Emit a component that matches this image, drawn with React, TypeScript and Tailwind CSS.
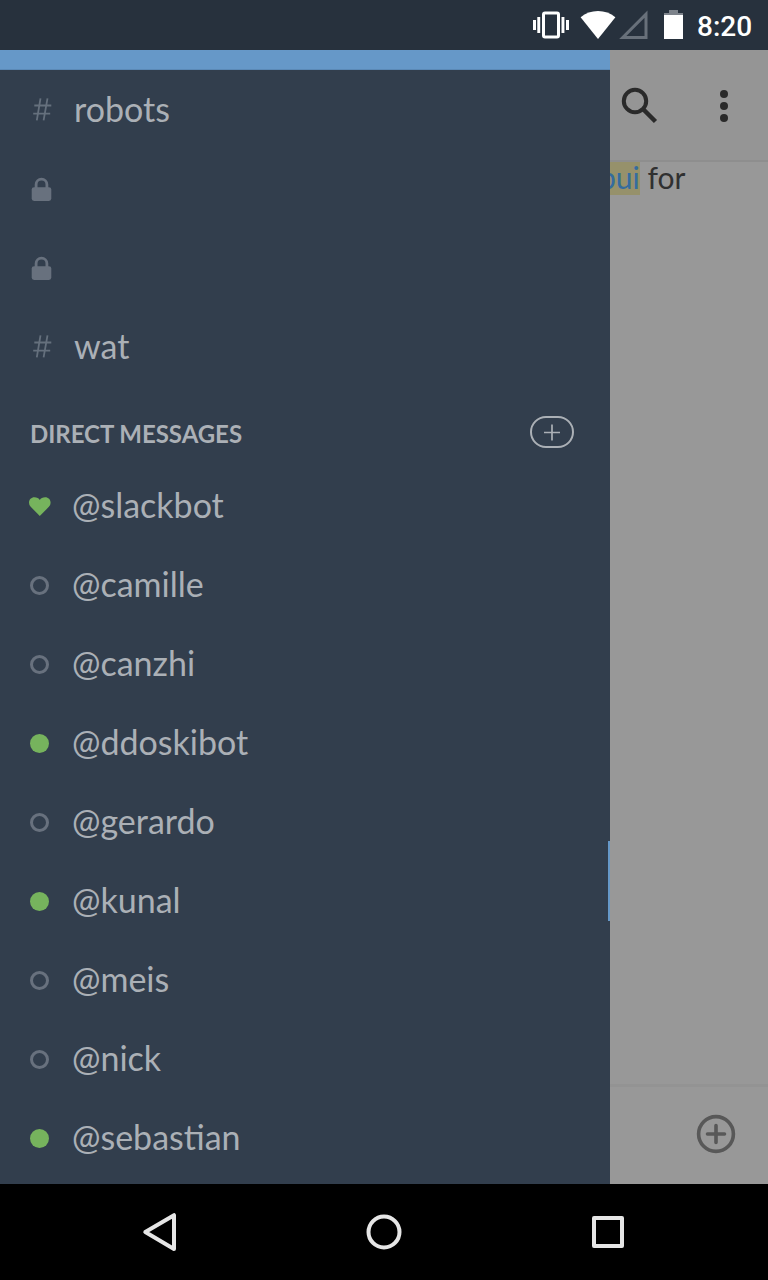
import React from "react";

type Presence = "bot" | "away" | "active";

const members: { name: string; presence: Presence }[] = [
  { name: "@slackbot", presence: "bot" },
  { name: "@camille", presence: "away" },
  { name: "@canzhi", presence: "away" },
  { name: "@ddoskibot", presence: "active" },
  { name: "@gerardo", presence: "away" },
  { name: "@kunal", presence: "active" },
  { name: "@meis", presence: "away" },
  { name: "@nick", presence: "away" },
  { name: "@sebastian", presence: "active" },
];

function StatusBar() {
  return (
    <header className="flex h-[50px] shrink-0 items-center bg-[#27313d] pl-[532px] text-white">
      <svg width="38" height="50" viewBox="532 0 38 50" fill="currentColor">
        <rect x="543.5" y="13" width="15" height="24" rx="1.5" fill="none" stroke="currentColor" strokeWidth="3" />
        <path d="M533 20h3v10h-3zM537.3 17h2.9v16h-2.9zM561.5 17h2.9v16h-2.9zM566 20h3v10h-3z" />
      </svg>
      <svg width="46" height="50" viewBox="570 0 46 50" fill="currentColor">
        <path d="M598 39 580.6 17.2C585.5 13.2 591.5 11 598 11S610.5 13.2 615.4 17.2Z" />
      </svg>
      <svg width="34" height="50" viewBox="616 0 34 50">
        <path d="M646 14.2V37.5H622.8Z" fill="none" stroke="#68707a" strokeWidth="3" />
      </svg>
      <svg width="38" height="50" viewBox="650 0 38 50">
        <path d="M669 10h9v3h5v2h-19v-2h5z" fill="#7d838b" />
        <path d="M664 15h19v24h-19z" fill="#fff" />
      </svg>
      <span className="ml-[9px] mt-[3px] font-['Roboto'] text-[28px] font-medium leading-none">8:20</span>
    </header>
  );
}

function Lock() {
  return (
    <svg className="-ml-px mt-px" width="21" height="24" viewBox="0 0 21 24">
      <rect x="0.7" y="10.2" width="19.6" height="13.8" rx="2.4" fill="#68717e" />
      <path d="M5.1 11V7.5a5.4 5.4 0 0 1 10.8 0V11" fill="none" stroke="#68717e" strokeWidth="2.8" />
    </svg>
  );
}

function Channel({ name }: { name?: string }) {
  return (
    <li className="flex h-[79px] items-center pl-8">
      {name ? (
        <>
          <svg className="-mt-0.5" width="20" height="24" viewBox="0 0 20 24" fill="none" stroke="#65707d" strokeWidth="1.8">
            <path d="M2.3 8.5h17M1.2 16.7h17M8.5 1.3 4.8 23.3M15.5 1.3 11.6 23.3" />
          </svg>
          <span className="-mt-0.5 ml-[22px] text-[34px] leading-none">{name}</span>
        </>
      ) : (
        <Lock />
      )}
    </li>
  );
}

function PresenceIcon({ presence }: { presence: Presence }) {
  if (presence === "bot") {
    return (
      <svg className="mt-px" width="22" height="20" viewBox="0 0 22 20" fill="#76b35d">
        <path d="M10.8 20 1.7 10.8A5.8 5.8 0 0 1 0 6.7C0 3.5 2.3 1.2 5.4 1.2 7.8 1.2 9.9 2.2 10.8 4 11.7 2.2 13.8 1.2 16.2 1.2 19.3 1.2 21.6 3.5 21.6 6.7A5.8 5.8 0 0 1 19.9 10.8Z" />
      </svg>
    );
  }
  if (presence === "active") {
    return <i className="mx-px mt-0.5 size-[19px] rounded-full bg-[#76b35d]" />;
  }
  return <i className="mx-px mt-0.5 size-[19px] rounded-full border-3 border-[#68717e]" />;
}

function Drawer() {
  return (
    <aside className="relative z-10 w-[610px] shrink-0 bg-[#323e4d] font-['Lato',sans-serif] text-[#abb0b6]">
      <div className="h-5 border-b border-[#5b89b6] bg-[#6698c8]" />
      <ul>
        <Channel name="robots" />
        <Channel />
        <Channel />
        <Channel name="wat" />
      </ul>
      <div className="flex h-20 items-center justify-between pl-[30px] pr-9 pt-3">
        <h2 className="mt-1 text-[24px] font-bold leading-none tracking-[-0.04px]">DIRECT MESSAGES</h2>
        <svg width="44" height="32" viewBox="0 0 44 32" fill="none" stroke="currentColor">
          <rect x="1" y="1" width="42" height="30" rx="15" strokeWidth="2" />
          <path d="M14 16.5h16M22 8.5v16" strokeWidth="1.7" />
        </svg>
      </div>
      <ul>
        {members.map((m) => (
          <li key={m.name} className="flex h-[79px] items-center pl-[29px]">
            <span className="flex w-[43px] items-center">
              <PresenceIcon presence={m.presence} />
            </span>
            <span className="-mt-0.5 text-[34px] leading-none">{m.name}</span>
          </li>
        ))}
      </ul>
      <div className="absolute right-0 top-[791px] h-20 w-0.5 bg-[#6698c8]" />
    </aside>
  );
}

function Conversation() {
  return (
    <main className="flex min-w-0 flex-1 flex-col bg-[#989898]">
      <div className="flex h-[110px] shrink-0 bg-[#959595]">
        <svg width="158" height="110" viewBox="610 50 158 110">
          <circle cx="635" cy="101" r="11.2" fill="none" stroke="#2a2a2a" strokeWidth="4" />
          <path d="m643.5 109.5 12 12" stroke="#2a2a2a" strokeWidth="4.5" />
          <g fill="#2a2a2a">
            <circle cx="724" cy="94" r="4" />
            <circle cx="724" cy="106" r="4" />
            <circle cx="724" cy="118" r="4" />
          </g>
        </svg>
      </div>
      <div className="h-[2px] shrink-0 bg-[#8e8e8e]" />
      <div className="flex flex-1 items-start">
        <p className="flex whitespace-pre font-['Lato',sans-serif] text-[30px] leading-[30px] text-[#303030]">
          <span className="-ml-[11px] h-[33px] bg-[#96916b] text-[#346c9e]">pui</span>
          <span> for</span>
        </p>
      </div>
      <div className="h-[3px] shrink-0 bg-[#939393]" />
      <div className="flex h-[97px] shrink-0 items-center justify-end pb-1 pr-8">
        <svg width="40" height="40" viewBox="0 0 40 40" fill="none" stroke="#585858" strokeWidth="3.6">
          <circle cx="20" cy="20" r="17.4" />
          <path d="M11.5 20h17M20 11.5v17" strokeLinecap="round" />
        </svg>
      </div>
    </main>
  );
}

function NavigationBar() {
  return (
    <nav className="flex h-24 shrink-0 items-center justify-center bg-black">
      <svg width="768" height="96" viewBox="0 0 768 96" fill="none" stroke="#e6e6e6" strokeWidth="4" strokeLinejoin="round">
        <path d="M174 31.2V48 65L145.3 48Z" />
        <circle cx="384" cy="48" r="15.5" />
        <rect x="594" y="34" width="28" height="28" />
      </svg>
    </nav>
  );
}

export default function App() {
  return (
    <div className="flex h-[1280px] w-[768px] flex-col overflow-hidden">
      <StatusBar />
      <div className="flex min-h-0 flex-1">
        <Drawer />
        <Conversation />
      </div>
      <NavigationBar />
    </div>
  );
}
